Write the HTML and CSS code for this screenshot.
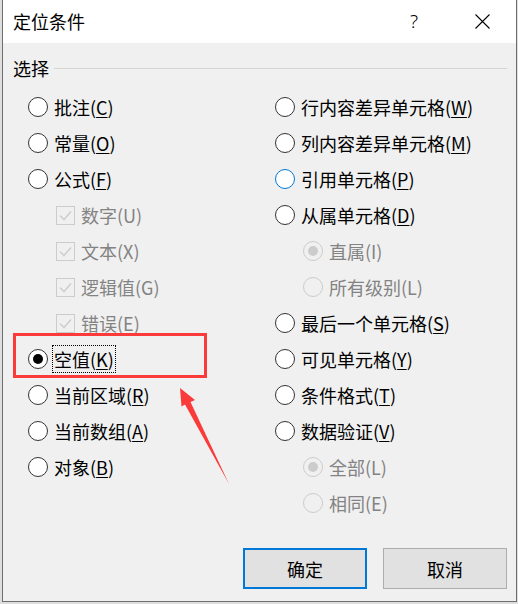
FILE: index.html
```html
<!DOCTYPE html>
<html lang="zh-CN">
<head>
    <meta charset="UTF-8">
    <meta name="viewport" content="width=device-width, initial-scale=1.0">
    <title>定位条件</title>
    <link rel="stylesheet" href="styles.css">
</head>
<body>
    <div class="dialog">
        <div class="titlebar">
            <span class="title">定位条件</span>
            <span class="help">?</span>
            <svg class="close" width="15" height="15" viewBox="0 0 15 15">
                <path d="M0.5 0.5 L14.5 14.5 M14.5 0.5 L0.5 14.5" stroke="#000" stroke-width="1.1" fill="none"/>
            </svg>
        </div>

        <div class="content">
            <div class="group-head">
                <span>选择</span>
                <span class="rule"></span>
            </div>

            <div class="options">
                <!-- 左列 -->
                <div class="col">
                    <div class="opt"><span class="radio"></span><span>批注(<u>C</u>)</span></div>
                    <div class="opt"><span class="radio"></span><span>常量(<u>O</u>)</span></div>
                    <div class="opt"><span class="radio"></span><span>公式(<u>F</u>)</span></div>
                    <div class="opt sub disabled"><span class="check"><svg width="17" height="17" viewBox="0 0 17 17"><path d="M3 8.5 L7 12.5 L14 4.5" stroke="#cfcfcf" stroke-width="1.6" fill="none"/></svg></span><span>数字(U)</span></div>
                    <div class="opt sub disabled"><span class="check"><svg width="17" height="17" viewBox="0 0 17 17"><path d="M3 8.5 L7 12.5 L14 4.5" stroke="#cfcfcf" stroke-width="1.6" fill="none"/></svg></span><span>文本(X)</span></div>
                    <div class="opt sub disabled"><span class="check"><svg width="17" height="17" viewBox="0 0 17 17"><path d="M3 8.5 L7 12.5 L14 4.5" stroke="#cfcfcf" stroke-width="1.6" fill="none"/></svg></span><span>逻辑值(G)</span></div>
                    <div class="opt sub disabled"><span class="check"><svg width="17" height="17" viewBox="0 0 17 17"><path d="M3 8.5 L7 12.5 L14 4.5" stroke="#cfcfcf" stroke-width="1.6" fill="none"/></svg></span><span>错误(E)</span></div>
                    <div class="opt"><span class="radio checked"></span><span class="focus">空值(<u>K</u>)</span></div>
                    <div class="opt"><span class="radio"></span><span>当前区域(<u>R</u>)</span></div>
                    <div class="opt"><span class="radio"></span><span>当前数组(<u>A</u>)</span></div>
                    <div class="opt"><span class="radio"></span><span>对象(<u>B</u>)</span></div>
                </div>

                <!-- 右列 -->
                <div class="col">
                    <div class="opt"><span class="radio"></span><span>行内容差异单元格(<u>W</u>)</span></div>
                    <div class="opt"><span class="radio"></span><span>列内容差异单元格(<u>M</u>)</span></div>
                    <div class="opt"><span class="radio hover"></span><span>引用单元格(<u>P</u>)</span></div>
                    <div class="opt"><span class="radio"></span><span>从属单元格(<u>D</u>)</span></div>
                    <div class="opt sub disabled"><span class="radio checked"></span><span>直属(I)</span></div>
                    <div class="opt sub disabled"><span class="radio"></span><span>所有级别(L)</span></div>
                    <div class="opt"><span class="radio"></span><span>最后一个单元格(<u>S</u>)</span></div>
                    <div class="opt"><span class="radio"></span><span>可见单元格(<u>Y</u>)</span></div>
                    <div class="opt"><span class="radio"></span><span>条件格式(<u>T</u>)</span></div>
                    <div class="opt"><span class="radio"></span><span>数据验证(<u>V</u>)</span></div>
                    <div class="opt sub disabled"><span class="radio checked"></span><span>全部(L)</span></div>
                    <div class="opt sub disabled"><span class="radio"></span><span>相同(E)</span></div>
                </div>
            </div>

            <div class="buttons">
                <button class="btn btn-default">确定</button>
                <button class="btn">取消</button>
            </div>
        </div>
    </div>

    <!-- 标注：红框和箭头 -->
    <svg class="marks" width="518" height="604" viewBox="0 0 518 604">
        <rect x="14.5" y="334.5" width="191" height="42" fill="none" stroke="#fb3a3a" stroke-width="3"/>
        <polygon points="180,388 195,400 190.5,402 229,484 185,404.5 181.5,406.5" fill="#fb3a3a"/>
    </svg>
</body>
</html>
```

FILE: styles.css
```css
        body {
            margin: 0;
            width: 518px;
            height: 604px;
            position: relative;
            overflow: hidden;
            background-color: #dedede;
            font-family: "Noto Sans CJK SC", "Noto Sans", sans-serif;
            color: #000;
        }
        .dialog {
            margin-left: 2px;
            width: 515px;
            height: 602px;
            box-sizing: border-box;
            border: 1px solid #6e6e6e;
            border-top: none;
            background-color: #f0f0f0;
            display: flex;
            flex-direction: column;
        }
        .titlebar {
            height: 43px;
            flex: none;
            background-color: #fff;
            display: flex;
            align-items: center;
            padding: 0 26px 0 10px;
        }
        .title {
            flex: 1;
            font-size: 18px;
            line-height: 24px;
            margin-top: -2px;
        }
        .help {
            font-family: "Noto Sans", sans-serif;
            font-weight: 300;
            font-size: 19px;
            line-height: 24px;
            margin-right: 57px;
            margin-top: -1px;
        }
        .close {
            display: block;
            margin-top: -1px;
        }
        .content {
            flex: 1;
            display: flex;
            flex-direction: column;
            padding: 13px 0 12px 0;
        }
        .group-head {
            display: flex;
            align-items: center;
            height: 24px;
            padding: 0 9px 0 10px;
            font-size: 18px;
            line-height: 24px;
        }
        .rule {
            flex: 1;
            height: 1px;
            margin-left: 5px;
            background-color: #d5d5d5;
        }
        .options {
            display: grid;
            grid-template-columns: 247px 1fr;
            padding-left: 25px;
            margin-top: 9px;
        }
        .opt {
            display: flex;
            align-items: center;
            gap: 6px;
            height: 36px;
            font-size: 18px;
            line-height: 24px;
            white-space: nowrap;
        }
        .opt u {
            text-decoration-thickness: 1px;
            text-underline-offset: 2px;
        }
        .sub {
            padding-left: 28px;
        }
        .disabled {
            color: #838383;
        }
        .radio {
            width: 20px;
            height: 20px;
            flex: none;
            box-sizing: border-box;
            border: 1px solid #333;
            border-radius: 50%;
            background-color: #fff;
            display: grid;
            place-items: center;
        }
        .radio.hover {
            border-color: #0078d7;
        }
        .radio.checked::after {
            content: "";
            width: 10px;
            height: 10px;
            border-radius: 50%;
            background-color: #000;
        }
        .disabled .radio {
            border-color: #cccccc;
            background-color: #f0f0f0;
        }
        .disabled .radio.checked::after {
            background-color: #cccccc;
        }
        .check {
            width: 19px;
            height: 19px;
            flex: none;
            box-sizing: border-box;
            border: 1px solid #cccccc;
            display: grid;
            place-items: center;
        }
        .check svg {
            display: block;
        }
        .focus {
            outline: 1px dotted #000;
            outline-offset: 1px;
        }
        .buttons {
            margin-top: auto;
            display: flex;
            justify-content: flex-end;
            gap: 16px;
            padding-right: 9px;
        }
        .btn {
            width: 124px;
            height: 41px;
            box-sizing: border-box;
            background-color: #e1e1e1;
            border: 1px solid #adadad;
            font-family: inherit;
            font-size: 18px;
            color: #000;
            padding: 0;
        }
        .btn-default {
            border: 2px solid #0078d7;
        }
        .marks {
            position: absolute;
            left: 0;
            top: 0;
            pointer-events: none;
        }
```
